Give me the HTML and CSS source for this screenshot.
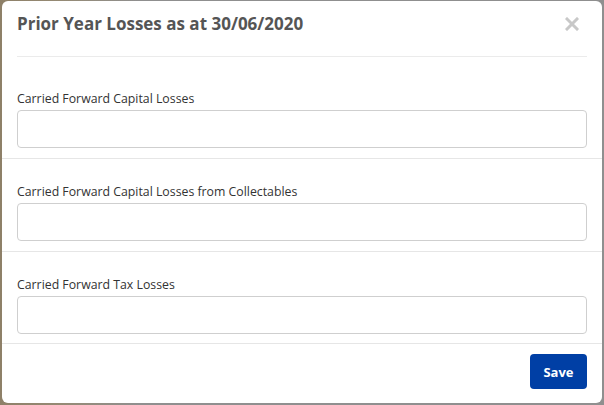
FILE: index.html
```html
<!DOCTYPE html>
<html lang="en">
<head>
  <meta charset="UTF-8" />
  <title>Prior Year Losses</title>
  <link rel="stylesheet" href="styles.css">
</head>
<body>

<div class="modal">
  <div class="modal-header">
    <h2 class="modal-title">Prior Year Losses as at 30/06/2020</h2>
    <button class="close-btn" aria-label="Close">
      <svg width="14" height="14" viewBox="0 0 14 14">
        <path d="M2 2 L12 12 M12 2 L2 12" stroke="#c8c8c8" stroke-width="3" stroke-linecap="square"/>
      </svg>
    </button>
  </div>

  <div class="modal-body">
    <div class="field first">
      <label class="field-label">Carried Forward Capital Losses</label>
      <input class="field-input" type="text">
    </div>
    <div class="field">
      <label class="field-label">Carried Forward Capital Losses from Collectables</label>
      <input class="field-input" type="text">
    </div>
    <div class="field last">
      <label class="field-label">Carried Forward Tax Losses</label>
      <input class="field-input" type="text">
    </div>
  </div>

  <div class="modal-footer">
    <button class="save-btn">Save</button>
  </div>
</div>

</body>
</html>
```

FILE: styles.css
```css
body {
  margin: 0;
  height: 405px;
  overflow: hidden;
  background: linear-gradient(to right, #8e8068 0%, #958a74 60px, #8f8f8f 140px, #8f8f8f 100%);
  font-family: 'Open Sans', 'Lato', sans-serif;
  padding: 1px 2px 2px 2px;
  box-sizing: border-box;
}

.modal {
  height: 402px;
  background-color: #fff;
  border-radius: 6px;
  display: flex;
  flex-direction: column;
}

.modal-header {
  margin: 0 15px;
  height: 55px;
  border-bottom: 1px solid #ebebeb;
  display: flex;
  justify-content: space-between;
  align-items: flex-start;
}

.modal-title {
  margin: 12px 0 0 0;
  font-size: 17px;
  font-weight: 700;
  color: #555;
  line-height: 22px;
}

.close-btn {
  margin: 16px 8px 0 0;
  padding: 0;
  border: none;
  background: none;
  cursor: pointer;
  line-height: 0;
}

.field {
  padding: 25px 15px 10px;
  border-bottom: 1px solid #e6e6e6;
  display: flex;
  flex-direction: column;
}

.field.first {
  padding-top: 34px;
}

.field.last {
  padding-bottom: 9px;
}

.field-label {
  font-size: 12.3px;
  color: #333;
  line-height: 15px;
  margin-bottom: 4px;
}

.field-input {
  height: 38px;
  box-sizing: border-box;
  border: 1px solid #cfcfcf;
  border-radius: 4px;
  margin: 0;
  font-size: 13px;
}

.modal-footer {
  flex: 1;
  display: flex;
  justify-content: flex-end;
  align-items: flex-start;
  padding: 10px 15px 0;
}

.save-btn {
  width: 57px;
  height: 35px;
  background-color: #003fa5;
  color: #fff;
  border: none;
  border-radius: 4px;
  font-family: inherit;
  font-size: 13px;
  font-weight: 700;
  cursor: pointer;
}
```
